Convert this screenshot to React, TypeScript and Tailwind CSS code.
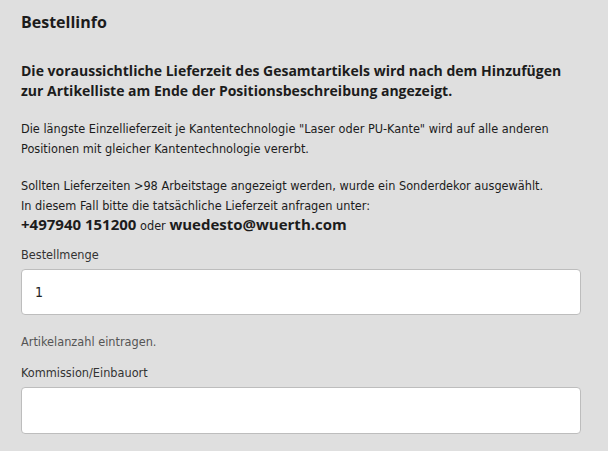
const narrow = "font-['DejaVu_Sans_Condensed','DejaVu_Sans',sans-serif]";
const heavy = "font-['Open_Sans','Liberation_Sans',sans-serif] font-bold";

function Field({ label, value, className }: { label: string; value?: string; className?: string }) {
  return (
    <div className={className}>
      <label className={`block text-[12.6px] leading-[19.5px] text-[#333] ${narrow}`}>{label}</label>
      <input
        type="text"
        defaultValue={value}
        className={`block w-full h-[46px] rounded-[4px] border border-[#bdbdbd] bg-white px-[13px] text-[14px] text-[#222] outline-none ${narrow}`}
      />
    </div>
  );
}

export default function App() {
  return (
    <div className="min-h-[451px] w-[608px] bg-[#dfdfdf] pl-[21px] pr-[27px] pt-[12px] text-[#1c1c1c]">
      <h2 className={`text-[16px] leading-[20px] ${heavy}`}>Bestellinfo</h2>

      <p className={`mt-[29px] text-[14px] leading-[20px] ${heavy}`}>
        Die voraussichtliche Lieferzeit des Gesamtartikels wird nach dem Hinzufügen zur Artikelliste am Ende der
        Positionsbeschreibung angezeigt.
      </p>

      <p className={`mt-[18px] whitespace-nowrap text-[12.6px] leading-[19.5px] ${narrow}`}>
        Die längste Einzellieferzeit je Kantentechnologie "Laser oder PU-Kante" wird auf alle anderen
        <br />
        Positionen mit gleicher Kantentechnologie vererbt.
      </p>

      <p className={`mt-[18px] whitespace-nowrap text-[12.6px] leading-[19.5px] ${narrow}`}>
        Sollten Lieferzeiten &gt;98 Arbeitstage angezeigt werden, wurde ein Sonderdekor ausgewählt.
        <br />
        In diesem Fall bitte die tatsächliche Lieferzeit anfragen unter:
        <br />
        <span className={`text-[15px] ${heavy}`}>+497940 151200</span> oder{" "}
        <span className={`text-[15px] ${heavy}`}>wuedesto@wuerth.com</span>
      </p>

      <Field label="Bestellmenge" value="1" className="mt-[9px] flex flex-col gap-[5px]" />

      <p className={`mt-[17px] text-[12.6px] leading-[19.5px] text-[#555] ${narrow}`}>Artikelanzahl eintragen.</p>

      <Field label="Kommission/Einbauort" className="mt-[11.5px] flex flex-col gap-[4px] [&_input]:h-[47px]" />
    </div>
  );
}
